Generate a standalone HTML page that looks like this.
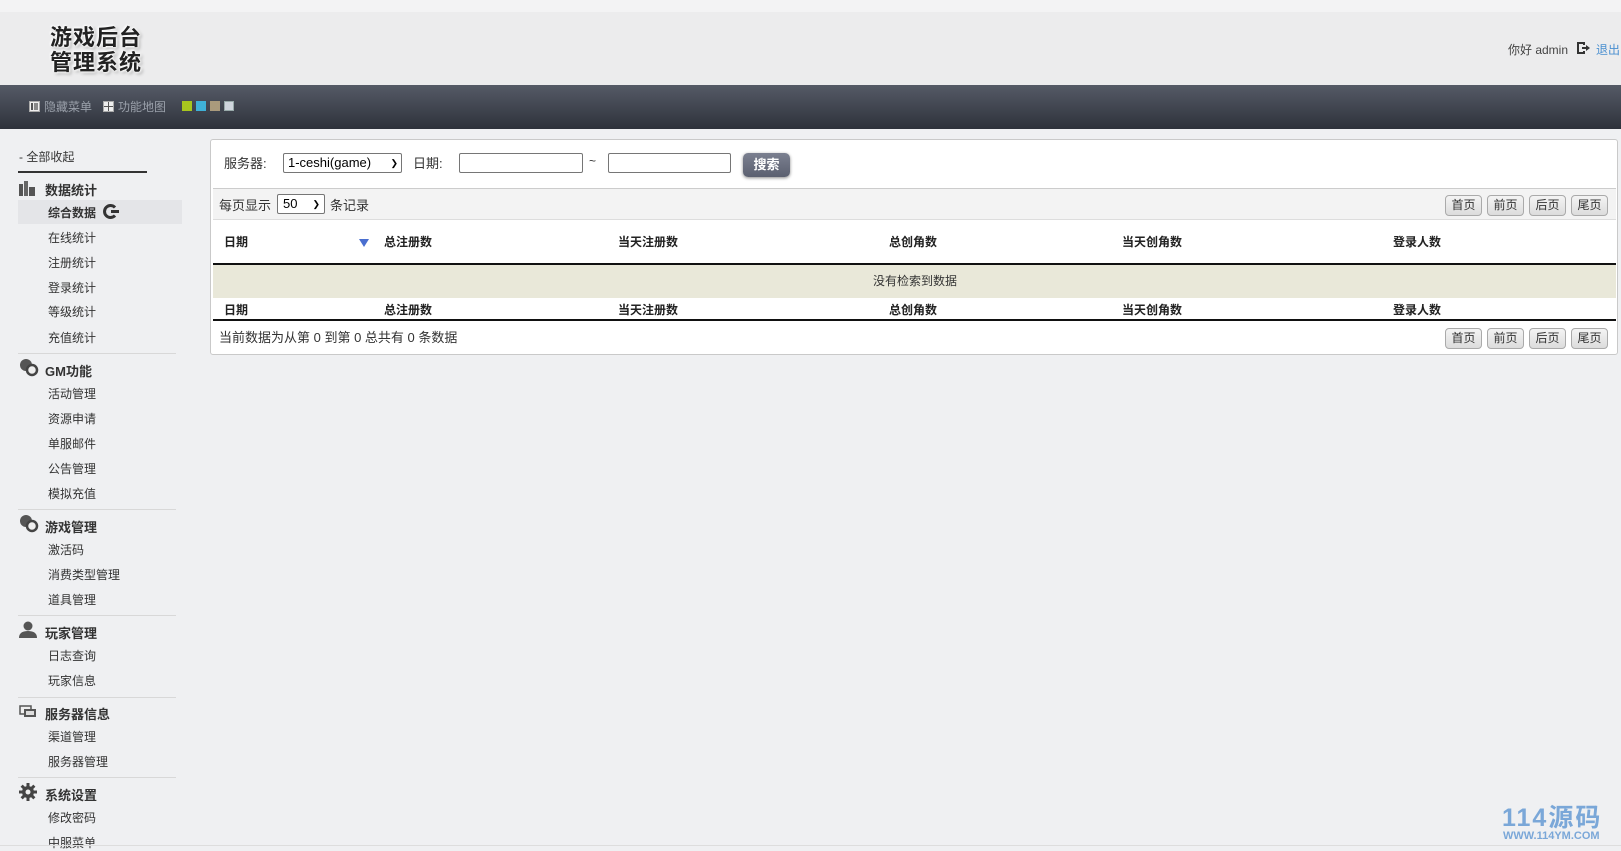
<!DOCTYPE html>
<html><head><meta charset="utf-8">
<style>
*{margin:0;padding:0;box-sizing:border-box}
body{width:1621px;height:849px;overflow:hidden;background:#eff0f2;font-family:"Liberation Sans","Noto Sans CJK SC",sans-serif;font-size:12px;color:#333;position:relative}
.abs{position:absolute;white-space:nowrap}
#top{position:absolute;left:0;top:0;width:1621px;height:85px;background:linear-gradient(#f3f3f4 0,#f3f3f4 12px,#ececed 12px,#ececed 85px)}
.logo{position:absolute;left:50px;top:24px;font-family:"WenQuanYi Zen Hei","Noto Sans CJK SC",sans-serif;font-size:22px;font-weight:bold;line-height:25px;color:#222;text-shadow:0 0 3px #fff,1px 1px 2px #fff,-1px -1px 2px #fff,2px 2px 3px #999;letter-spacing:1px}
#nav{position:absolute;left:0;top:85px;width:1621px;height:44px;background:linear-gradient(#555a66,#2e323b)}
.nav{color:#9aa0aa;font-size:12px}
.sq{position:absolute;width:10px;height:10px;top:101px}
.side{font-size:12px;color:#333}
.sh{font-size:13px;font-weight:bold;color:#333}
.div{position:absolute;left:18px;width:158px;height:1px;background:#d8d8d8}
#box{position:absolute;left:210px;top:139px;width:1408px;height:216px;background:#fff;border:1px solid #c9c9c9;border-radius:3px}
.inp{position:absolute;height:20px;border:1px solid #767676;background:#fff;border-radius:2px}
.btn{position:absolute;width:37px;height:21px;border:1px solid #aaa;border-radius:4px;background:linear-gradient(#f4f4f4,#dcdcdc);font-size:12px;text-align:center;line-height:19px;color:#333}
.th{font-weight:bold;font-size:12px;color:#222}
</style></head><body>
<div id="top"></div>
<div class="logo">游戏后台<br>管理系统</div>
<div class="abs" style="left:1508px;top:41px;color:#444">你好 admin</div>
<svg class="abs" style="left:1576px;top:41px" width="15" height="14" viewBox="0 0 15 14"><path d="M1 1h8v3H7V3H3v8h4v-1h2v3H1z" fill="#333"/><path d="M6 6h4V4l4 3-4 3V8H6z" fill="#333"/></svg>
<div class="abs" style="left:1596px;top:41px;color:#4a8fd0">退出</div>
<div id="nav"></div>
<svg class="abs" style="left:29px;top:101px" width="11" height="11"><rect x=".5" y=".5" width="10" height="10" fill="#eee" stroke="#aaa"/><rect x="2" y="2" width="2" height="7" fill="#555"/><rect x="5" y="2" width="4" height="7" fill="#888"/></svg>
<div class="abs nav" style="left:44px;top:98px">隐藏菜单</div>
<svg class="abs" style="left:103px;top:101px" width="11" height="11"><rect x=".5" y=".5" width="10" height="10" fill="#eee" stroke="#aaa"/><path d="M5.5 1v9M1 5.5h9" stroke="#555"/></svg>
<div class="abs nav" style="left:118px;top:98px">功能地图</div>
<div class="sq" style="left:182px;background:#a8c61e"></div>
<div class="sq" style="left:196px;background:#3fb1d8"></div>
<div class="sq" style="left:210px;background:#aa9a7c"></div>
<div class="sq" style="left:224px;background:#d0d6de;border:1px solid #9aa"></div>

<div class="abs side" style="left:19px;top:148px">- 全部收起</div>
<div class="abs" style="left:18px;top:171px;width:129px;height:2px;background:#333"></div>
<div class="abs" style="left:18px;top:200px;width:164px;height:24px;background:#e4e5e8"></div>
<svg class="abs" style="left:19px;top:181px" width="17" height="15"><rect x="0" y="3" width="4" height="12" fill="#555"/><rect x="5" y="0" width="4" height="15" fill="#666"/><rect x="10" y="6" width="6" height="9" fill="#555"/></svg>
<div class="abs sh" style="left:45px;top:180px">数据统计</div>
<div class="abs side" style="left:48px;top:204px;font-weight:bold">综合数据</div>
<svg class="abs" style="left:103px;top:204px" width="17" height="15"><path d="M12 3.5A6 6 0 1 0 12 11.5" stroke="#333" stroke-width="3" fill="none"/><rect x="8" y="6" width="8" height="3" fill="#333"/></svg>
<div class="abs side" style="left:48px;top:229px">在线统计</div>
<div class="abs side" style="left:48px;top:254px">注册统计</div>
<div class="abs side" style="left:48px;top:279px">登录统计</div>
<div class="abs side" style="left:48px;top:303px">等级统计</div>
<div class="abs side" style="left:48px;top:329px">充值统计</div>
<div class="div" style="top:353px"></div>
<svg class="abs" style="left:19px;top:359px" width="20" height="18"><circle cx="7" cy="6" r="6" fill="#555"/><circle cx="13" cy="11" r="5" fill="#eee" stroke="#444" stroke-width="2.5"/></svg>
<div class="abs sh" style="left:45px;top:361px">GM功能</div>
<div class="abs side" style="left:48px;top:385px">活动管理</div>
<div class="abs side" style="left:48px;top:410px">资源申请</div>
<div class="abs side" style="left:48px;top:435px">单服邮件</div>
<div class="abs side" style="left:48px;top:460px">公告管理</div>
<div class="abs side" style="left:48px;top:485px">模拟充值</div>
<div class="div" style="top:509px"></div>
<svg class="abs" style="left:19px;top:515px" width="20" height="18"><circle cx="7" cy="6" r="6" fill="#555"/><circle cx="13" cy="11" r="5" fill="#eee" stroke="#444" stroke-width="2.5"/></svg>
<div class="abs sh" style="left:45px;top:517px">游戏管理</div>
<div class="abs side" style="left:48px;top:541px">激活码</div>
<div class="abs side" style="left:48px;top:566px">消费类型管理</div>
<div class="abs side" style="left:48px;top:591px">道具管理</div>
<div class="div" style="top:615px"></div>
<svg class="abs" style="left:19px;top:621px" width="18" height="17"><circle cx="9" cy="5" r="4.5" fill="#555"/><path d="M0 17q0-7 9-7t9 7z" fill="#555"/></svg>
<div class="abs sh" style="left:45px;top:623px">玩家管理</div>
<div class="abs side" style="left:48px;top:647px">日志查询</div>
<div class="abs side" style="left:48px;top:672px">玩家信息</div>
<div class="div" style="top:697px"></div>
<svg class="abs" style="left:19px;top:705px" width="18" height="14"><rect x="1" y="1" width="11" height="8" fill="#eee" stroke="#555" stroke-width="1.5"/><rect x="5" y="4" width="12" height="8" fill="#555"/><rect x="7" y="6" width="8" height="4" fill="#ddd"/></svg>
<div class="abs sh" style="left:45px;top:704px">服务器信息</div>
<div class="abs side" style="left:48px;top:728px">渠道管理</div>
<div class="abs side" style="left:48px;top:753px">服务器管理</div>
<div class="div" style="top:777px"></div>
<svg class="abs" style="left:19px;top:783px" width="18" height="18" viewBox="0 0 18 18"><g fill="#444"><circle cx="9" cy="9" r="6"/><rect x="7.5" y="0" width="3" height="18"/><rect x="0" y="7.5" width="18" height="3"/><rect x="7.5" y="0" width="3" height="18" transform="rotate(45 9 9)"/><rect x="7.5" y="0" width="3" height="18" transform="rotate(-45 9 9)"/></g><circle cx="9" cy="9" r="2.5" fill="#eee"/></svg>
<div class="abs sh" style="left:45px;top:785px">系统设置</div>
<div class="abs side" style="left:48px;top:809px">修改密码</div>
<div class="abs side" style="left:48px;top:834px">中服菜单</div>

<div id="box"></div>
<div class="abs" style="left:224px;top:153px;font-size:13px">服务器:</div>
<div class="inp" style="left:283px;top:153px;width:119px;font-size:13px;padding-left:4px;line-height:18px;color:#000">1-ceshi(game)<span style="position:absolute;right:3px;font-size:9px">&#10095;</span></div>
<div class="abs" style="left:413px;top:153px;font-size:13px">日期:</div>
<div class="inp" style="left:459px;top:153px;width:124px"></div>
<div class="abs" style="left:589px;top:154px">~</div>
<div class="inp" style="left:608px;top:153px;width:123px"></div>
<div class="abs" style="left:743px;top:153px;width:47px;height:24px;border-radius:5px;background:linear-gradient(#7b8090,#5b6070);box-shadow:0 1px 3px #888;color:#fff;font-weight:bold;font-size:13px;text-align:center;line-height:24px">搜索</div>

<div class="abs" style="left:213px;top:188px;width:1403px;height:32px;background:#f3f3f3;border-top:1px solid #ccc;border-bottom:1px solid #ddd"></div>
<div class="abs" style="left:219px;top:195px;font-size:13px">每页显示</div>
<div class="inp" style="left:277px;top:194px;width:48px;font-size:13px;padding-left:5px;line-height:18px;color:#000">50<span style="position:absolute;right:4px;font-size:9px">&#10095;</span></div>
<div class="abs" style="left:330px;top:195px;font-size:13px">条记录</div>
<div class="btn" style="left:1445px;top:195px">首页</div>
<div class="btn" style="left:1487px;top:195px">前页</div>
<div class="btn" style="left:1529px;top:195px">后页</div>
<div class="btn" style="left:1571px;top:195px">尾页</div>

<div class="abs th" style="left:224px;top:233px">日期</div>
<div class="abs" style="left:359px;top:239px;width:0;height:0;border-left:5px solid transparent;border-right:5px solid transparent;border-top:8px solid #4a6fd0"></div>
<div class="abs th" style="left:384px;top:233px">总注册数</div>
<div class="abs th" style="left:618px;top:233px">当天注册数</div>
<div class="abs th" style="left:889px;top:233px">总创角数</div>
<div class="abs th" style="left:1122px;top:233px">当天创角数</div>
<div class="abs th" style="left:1393px;top:233px">登录人数</div>
<div class="abs" style="left:213px;top:263px;width:1403px;height:2px;background:#111"></div>
<div class="abs" style="left:213px;top:265px;width:1403px;height:33px;background:#e9e8d9"></div>
<div class="abs" style="left:873px;top:272px;color:#333">没有检索到数据</div>
<div class="abs th" style="left:224px;top:301px">日期</div>
<div class="abs th" style="left:384px;top:301px">总注册数</div>
<div class="abs th" style="left:618px;top:301px">当天注册数</div>
<div class="abs th" style="left:889px;top:301px">总创角数</div>
<div class="abs th" style="left:1122px;top:301px">当天创角数</div>
<div class="abs th" style="left:1393px;top:301px">登录人数</div>
<div class="abs" style="left:213px;top:319px;width:1403px;height:2px;background:#111"></div>
<div class="abs" style="left:219px;top:327px;font-size:13px">当前数据为从第 0 到第 0 总共有 0 条数据</div>
<div class="btn" style="left:1445px;top:328px">首页</div>
<div class="btn" style="left:1487px;top:328px">前页</div>
<div class="btn" style="left:1529px;top:328px">后页</div>
<div class="btn" style="left:1571px;top:328px">尾页</div>

<div class="abs" style="left:1502px;top:806px;font-size:25px;font-weight:bold;color:#7aa7d8;letter-spacing:2px;line-height:25px">114源码</div>
<div class="abs" style="left:1503px;top:830px;font-size:11px;font-weight:bold;color:#7aa7d8">WWW.114YM.COM</div>
<div class="abs" style="left:0;top:845px;width:1621px;height:1px;background:#ddd"></div>
</body></html>
